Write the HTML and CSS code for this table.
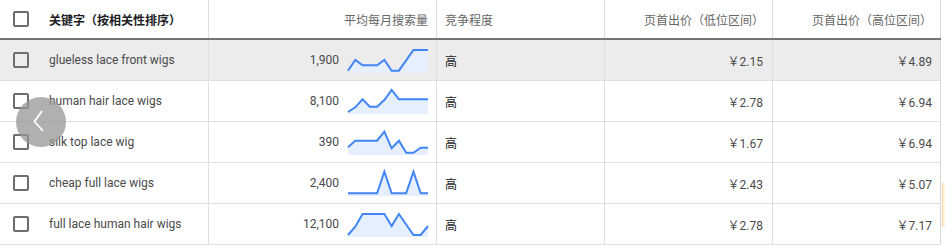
FILE: index.html
```html
<!DOCTYPE html>
<html lang="zh-CN">
<head>
<meta charset="utf-8">
<title>关键字</title>
<link rel="stylesheet" href="styles.css">
</head>
<body>
<div class="page">
  <div class="table">
    <div class="row head">
      <div class="cell kw"><span class="cb"></span><span class="head-main">关键字（按相关性排序）</span></div>
      <div class="cell right">平均每月搜索量</div>
      <div class="cell">竞争程度</div>
      <div class="cell right">页首出价（低位区间）</div>
      <div class="cell right">页首出价（高位区间）</div>
    </div>

    <div class="row hover">
      <div class="cell kw"><span class="cb"></span><span>glueless lace front wigs</span></div>
      <div class="cell right vol"><span>1,900</span>
        <svg class="spark" viewBox="0 0 80 25"><polygon class="area" points="0,22.7 7.27,12 14.55,17.3 21.82,17.3 29.09,17.3 36.36,12 43.64,22.7 50.91,22.7 58.18,12.4 65.45,2 72.73,2 80,2 80,25 0,25"/><polyline class="line" points="0,22.7 7.27,12 14.55,17.3 21.82,17.3 29.09,17.3 36.36,12 43.64,22.7 50.91,22.7 58.18,12.4 65.45,2 72.73,2 80,2"/></svg>
      </div>
      <div class="cell comp">高</div>
      <div class="cell right price">￥2.15</div>
      <div class="cell right price">￥4.89</div>
    </div>

    <div class="row">
      <div class="cell kw"><span class="cb"></span><span>human hair lace wigs</span></div>
      <div class="cell right vol"><span>8,100</span>
        <svg class="spark" viewBox="0 0 80 25"><polygon class="area" points="0,23 7.27,18.3 14.55,10.3 21.82,17.7 29.09,17.7 36.36,11 43.64,1 50.91,10.3 58.18,10.3 65.45,10.3 72.73,10.3 80,10.3 80,25 0,25"/><polyline class="line" points="0,23 7.27,18.3 14.55,10.3 21.82,17.7 29.09,17.7 36.36,11 43.64,1 50.91,10.3 58.18,10.3 65.45,10.3 72.73,10.3 80,10.3"/></svg>
      </div>
      <div class="cell comp">高</div>
      <div class="cell right price">￥2.78</div>
      <div class="cell right price">￥6.94</div>
    </div>

    <div class="row">
      <div class="cell kw"><span class="cb"></span><span>silk top lace wig</span></div>
      <div class="cell right vol"><span>390</span>
        <svg class="spark" viewBox="0 0 80 25"><polygon class="area" points="0,17.3 7.27,10.7 14.55,10.7 21.82,10.7 29.09,10.7 36.36,1.7 43.64,18.3 50.91,10.7 58.18,22.7 65.45,22.7 72.73,17.7 80,17.7 80,25 0,25"/><polyline class="line" points="0,17.3 7.27,10.7 14.55,10.7 21.82,10.7 29.09,10.7 36.36,1.7 43.64,18.3 50.91,10.7 58.18,22.7 65.45,22.7 72.73,17.7 80,17.7"/></svg>
      </div>
      <div class="cell comp">高</div>
      <div class="cell right price">￥1.67</div>
      <div class="cell right price">￥6.94</div>
    </div>

    <div class="row">
      <div class="cell kw"><span class="cb"></span><span>cheap full lace wigs</span></div>
      <div class="cell right vol"><span>2,400</span>
        <svg class="spark" viewBox="0 0 80 25"><polygon class="area" points="0,22.3 7.27,22.3 14.55,22.3 21.82,22.3 29.09,22.3 36.36,0.7 43.64,22.3 50.91,22.3 58.18,22.3 65.45,0.7 72.73,22.3 80,22.3 80,25 0,25"/><polyline class="line" points="0,22.3 7.27,22.3 14.55,22.3 21.82,22.3 29.09,22.3 36.36,0.7 43.64,22.3 50.91,22.3 58.18,22.3 65.45,0.7 72.73,22.3 80,22.3"/></svg>
      </div>
      <div class="cell comp">高</div>
      <div class="cell right price">￥2.43</div>
      <div class="cell right price">￥5.07</div>
    </div>

    <div class="row">
      <div class="cell kw"><span class="cb"></span><span>full lace human hair wigs</span></div>
      <div class="cell right vol"><span>12,100</span>
        <svg class="spark" viewBox="0 0 80 25"><polygon class="area" points="0,23 7.27,14.7 14.55,2 21.82,2 29.09,2 36.36,2 43.64,14 50.91,2 58.18,12.5 65.45,23 72.73,23 80,14 80,25 0,25"/><polyline class="line" points="0,23 7.27,14.7 14.55,2 21.82,2 29.09,2 36.36,2 43.64,14 50.91,2 58.18,12.5 65.45,23 72.73,23 80,14"/></svg>
      </div>
      <div class="cell comp">高</div>
      <div class="cell right price">￥2.78</div>
      <div class="cell right price">￥7.17</div>
    </div>
  </div>
  <div class="edge-tab"></div>
</div>

<button class="nav-prev" type="button" aria-label="上一页">
  <svg viewBox="0 0 50 50" width="50" height="50"><polyline points="26,14 18.5,24.5 27,34" /></svg>
</button>
</body>
</html>
```
FILE: styles.css
```css
* { box-sizing: border-box; }

html, body {
  margin: 0;
  padding: 0;
  background: #ffffff;
}

body {
  font-family: Roboto, "Noto Sans CJK SC", sans-serif;
  font-size: 12px;
  color: #3c4043;
  width: 945px;
  height: 246px;
  overflow: hidden;
  position: relative;
}

.page {
  display: flex;
  align-items: flex-start;
}

.table {
  width: 941px;
  flex: none;
}

.row {
  display: grid;
  grid-template-columns: 209px 228px 168px 168px 168px;
  height: 41px;
  border-bottom: 1px solid #e0e0e0;
}

.row.head {
  height: 40px;
  border-bottom: 2px solid #757575;
  color: #666666;
}

.row.hover {
  background: #ececec;
}

.cell {
  display: flex;
  align-items: center;
  border-right: 1px solid #e0e0e0;
  padding: 0 8px;
  white-space: nowrap;
  min-width: 0;
}

.cell:last-child {
  border-right-color: #d6d6d6;
}

.cell.right {
  justify-content: flex-end;
}

.cell.kw {
  padding-left: 13px;
  gap: 20px;
  color: #4a4a4a;
}

.head-main {
  color: #202124;
  font-weight: 700;
}

.cb {
  width: 16px;
  height: 16px;
  border: 2px solid #6d6d6d;
  border-radius: 2px;
  flex: none;
}

.vol {
  gap: 9px;
  color: #4a4a4a;
}

.spark {
  width: 80px;
  height: 25px;
  overflow: visible;
  flex: none;
  margin-top: 1px;
}

.spark .area {
  fill: #e6effd;
  stroke: none;
}

.spark .line {
  fill: none;
  stroke: #4285f4;
  stroke-width: 2;
  stroke-linejoin: miter;
}

.comp {
  color: #202124;
}

.price {
  color: #4a4a4a;
  padding-right: 9px;
}

.row .cell:last-child.price {
  padding-right: 8px;
}

.edge-tab {
  flex: none;
  width: 4px;
  height: 44px;
  margin-top: 183px;
  margin-left: 1px;
  background: #fef3dc;
  border-left: 1px solid #f5d79b;
}

.nav-prev {
  position: absolute;
  left: 16px;
  top: 97px;
  width: 50px;
  height: 50px;
  padding: 0;
  border: none;
  border-radius: 50%;
  background: rgba(150, 150, 150, 0.75);
  display: flex;
  align-items: center;
  justify-content: center;
}

.nav-prev svg {
  display: block;
}

.nav-prev polyline {
  fill: none;
  stroke: #ffffff;
  stroke-width: 1.8;
}
```
